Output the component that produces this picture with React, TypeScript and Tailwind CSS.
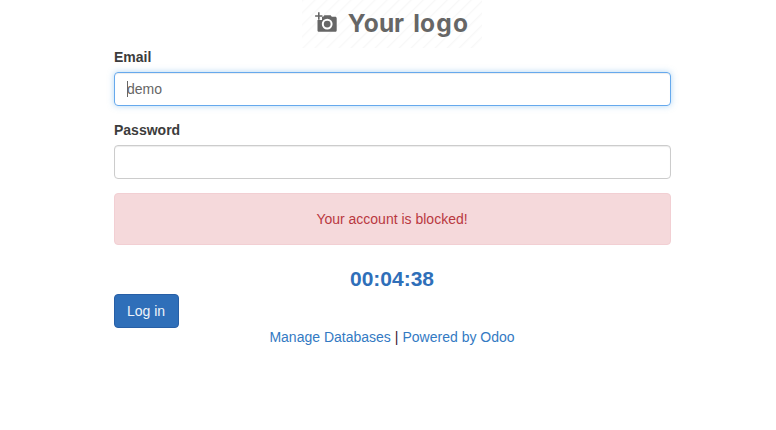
function Logo() {
  return (
    <svg className="-ml-px block h-12 w-[180px]" viewBox="0 0 180 48" role="img" aria-label="Your logo">
      <defs>
        <pattern id="stripes" width="8.5" height="8.5" patternUnits="userSpaceOnUse" patternTransform="rotate(45)">
          <rect width="1.4" height="8.5" fill="#f8f8f8" />
        </pattern>
      </defs>
      <rect width="180" height="48" fill="url(#stripes)" />
      <g fill="#666">
        <path
          fillRule="evenodd"
          d="M20 16.7h1.2l1.2-1.4h6.2l1.2 1.4h3.3c1 0 1.6.6 1.6 1.6v11.9c0 1-.6 1.6-1.6 1.6H17.1c-1 0-1.6-.6-1.6-1.6V20h4.5zM25.2 18.7a5.4 5.4 0 1 0 0 10.8 5.4 5.4 0 0 0 0-10.8z"
        />
        <circle cx="25.2" cy="24.1" r="3.4" />
        <path d="M16 12.3h1.6v2.9h2.8v1.6h-2.8v2.9H16v-2.9h-2.9v-1.6H16z" />
      </g>
      <text
        x="45.8 61.8 77 92 103 111.3 118 134.3 151"
        y="31.8"
        className="fill-[#666] font-[Inter,sans-serif] text-[24.5px] font-bold"
      >
        Your logo
      </text>
    </svg>
  );
}

export default function App() {
  return (
    <main className="flex h-[430px] flex-col bg-white pl-[114px] font-['Liberation_Sans',Arial,sans-serif] text-sm leading-5 text-[#333]">
      <form className="flex w-[557px] flex-col" onSubmit={(e) => e.preventDefault()}>
        <div className="mb-[-1px] flex h-12 justify-center">
          <Logo />
        </div>
        <label htmlFor="email" className="mb-[5px] font-bold text-[#3c3c3c]">Email</label>
        <div className="flex h-[34px] items-center rounded border border-[#66a9ed] px-3 shadow-[inset_0_1px_1px_rgba(0,0,0,0.075),0_0_6px_rgba(102,175,233,0.5)]">
          <span className="-mr-px h-4 w-px bg-[#666]" />
          <input id="email" defaultValue="demo" className="w-full text-[#666] outline-none" />
        </div>
        <label htmlFor="password" className="mt-3.5 mb-[5px] font-bold text-[#3c3c3c]">Password</label>
        <input
          id="password"
          type="password"
          className="h-[34px] rounded border border-[#ccc] px-3 shadow-[inset_0_1px_1px_rgba(0,0,0,0.075)] outline-none"
        />
        <p className="mt-3.5 h-[52px] rounded border border-[#f2cfd3] bg-[#f5d9db] py-[15px] pr-px text-center text-[#b9383f]">
          Your account is blocked!
        </p>
        <p className="mt-[22px] mb-[3px] pr-px text-center text-[21px] leading-6 font-bold text-[#2f6fb9]">00:04:38</p>
        <button className="h-[33.5px] w-[65px] rounded border border-[#275fa6] bg-[#2f6fb9] pr-px text-[#eef4fa]">Log in</button>
        <div className="-mt-[0.5px] flex justify-center gap-1 pr-px text-[#337ac3]">
          <a href="#">Manage Databases</a>
          <span className="text-[#402030]">|</span>
          <a href="#">Powered by Odoo</a>
        </div>
      </form>
    </main>
  );
}
